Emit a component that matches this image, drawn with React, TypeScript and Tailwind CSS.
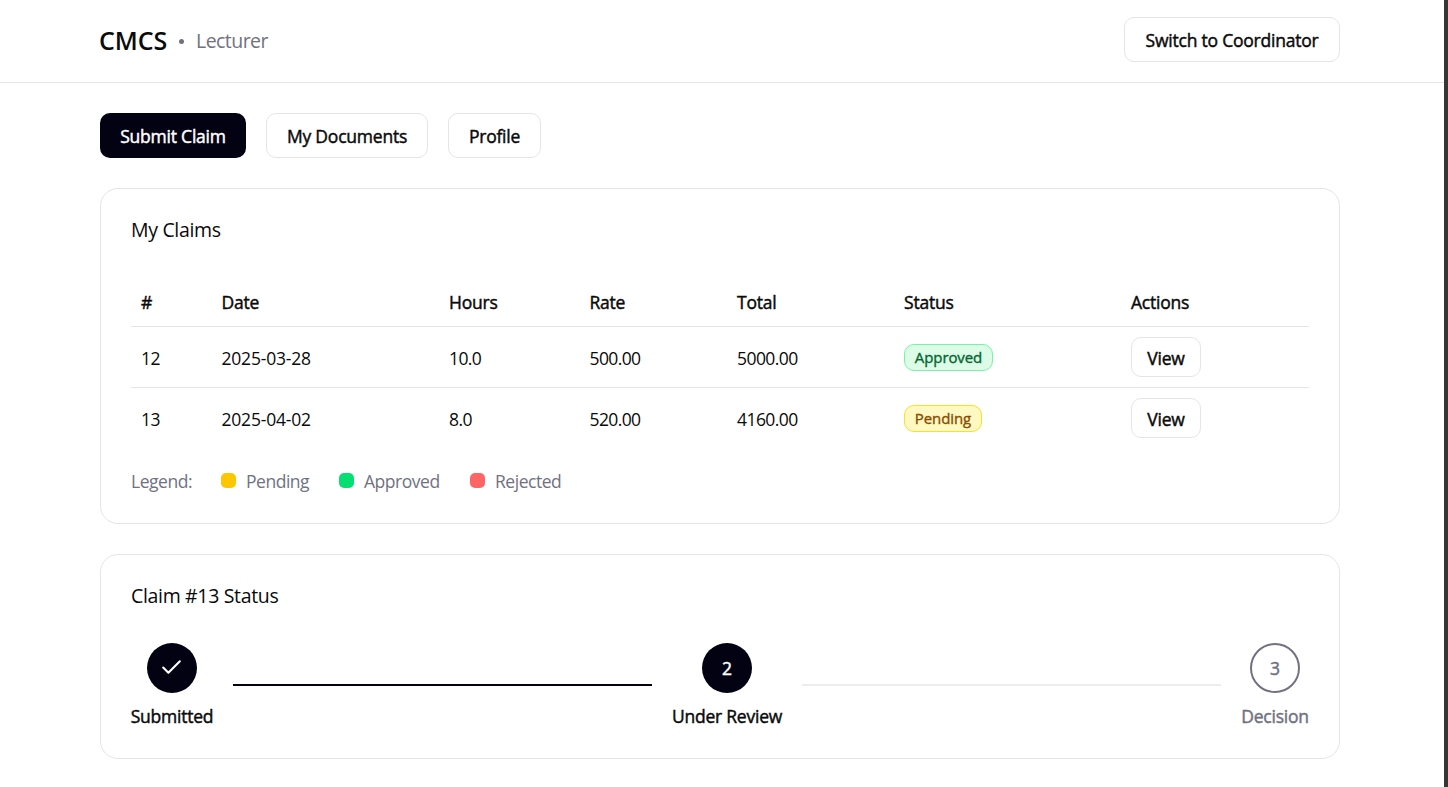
import React from "react";

const columns = ["#", "Date", "Hours", "Rate", "Total", "Status", "Actions"];

const claims = [
  { id: "12", date: "2025-03-28", hours: "10.0", rate: "500.00", total: "5000.00", status: "Approved" },
  { id: "13", date: "2025-04-02", hours: "8.0", rate: "520.00", total: "4160.00", status: "Pending" },
];

const legend = [
  { label: "Pending", color: "bg-[#fdc700]", width: "w-[88px]" },
  { label: "Approved", color: "bg-[#05df72]", width: "w-[101px]" },
  { label: "Rejected", color: "bg-[#ff6467]", width: "w-[91px]" },
];

const badgeStyles: Record<string, string> = {
  Approved: "w-[89px] border-[#7bf1a8] bg-[#dcfce7] text-[#016630]",
  Pending: "w-[78px] border-[#ffdf20] bg-[#fef9c2] text-[#894b00]",
};

const grid = "grid grid-cols-[80.5px_227.5px_140.5px_147.5px_167px_227px_188px]";

// Medium weight: regular outlines thickened by a hairline stroke.
const medium = "[-webkit-text-stroke:0.45px_currentColor] tracking-[-0.22px]";

function OutlineButton({ className, children }: { className: string; children: React.ReactNode }) {
  return (
    <button
      className={`flex items-center justify-center whitespace-nowrap rounded-[10px] border border-[#e5e5e5] bg-white pt-px ${medium} ${className}`}
    >
      {children}
    </button>
  );
}

function Card({ className, title, children }: { className: string; title: React.ReactNode; children: React.ReactNode }) {
  return (
    <section className={`rounded-[18px] border border-[#e5e5e5] bg-white px-[30px] pt-[29px] ${className}`}>
      <h2 className="h-6 text-[19.5px] leading-6 tracking-[-0.33px]">{title}</h2>
      {children}
    </section>
  );
}

export default function App() {
  return (
    <div className="flex h-[787px] w-[1448px] overflow-hidden bg-white font-['Open_Sans','Noto_Sans',sans-serif] text-[17.5px] leading-6 text-[#0a0a0a]">
      <div className="flex-1">
        <header className="flex h-[83px] items-center justify-between border-b border-[#e5e5e5] pr-[104px] pl-[100px]">
          <div className="flex items-center">
            <span className="-ml-px w-20 pb-0.5 text-[25px] font-semibold tracking-[-0.1px]">CMCS</span>
            <span className="mr-3 size-[5px] rounded-full bg-[#717182]" />
            <span className="text-[19.5px] tracking-[-0.55px] text-[#717182]">Lecturer</span>
          </div>
          <OutlineButton className="mb-1 h-[45px] w-[216px]">Switch to Coordinator</OutlineButton>
        </header>

        <main className="w-[1340px] pt-[30px] pl-[100px]">
          <nav className="flex gap-5">
            <button className={`flex h-[45px] w-[146px] items-center justify-center rounded-[10px] bg-[#030213] pt-px whitespace-nowrap text-white ${medium}`}>
              Submit Claim
            </button>
            <OutlineButton className="h-[45px] w-[162px]">My Documents</OutlineButton>
            <OutlineButton className="h-[45px] w-[93px]">Profile</OutlineButton>
          </nav>

          <Card className="mt-[30px] h-[336px]" title="My Claims">
            <div className="mt-[34px]">
              <div className={`${grid} h-[51px] items-center border-b border-[#e5e5e5] pt-px ${medium}`}>
                {columns.map((c) => (
                  <span key={c} className="pl-2.5">{c}</span>
                ))}
              </div>
              {claims.map((claim) => (
                <div key={claim.id} className={`${grid} h-[61px] items-center border-b border-[#e5e5e5] last:border-transparent`}>
                  <span className="pt-px pl-2.5 tracking-[-0.6px]">{claim.id}</span>
                  <span className="pt-px pl-2.5 tracking-[-0.2px]">{claim.date}</span>
                  <span className="pt-px pl-2.5 tracking-[-0.6px]">{claim.hours}</span>
                  <span className="pt-px pl-2.5 tracking-[-0.6px]">{claim.rate}</span>
                  <span className="pt-px pl-2.5 tracking-[-0.55px]">{claim.total}</span>
                  <span className="pl-2.5">
                    <span
                      className={`flex h-[27px] items-center justify-center rounded-[10px] border text-[15px] tracking-[-0.1px] [-webkit-text-stroke:0.35px_currentColor] ${badgeStyles[claim.status]}`}
                    >
                      {claim.status}
                    </span>
                  </span>
                  <span className="pl-2.5">
                    <OutlineButton className="h-10 w-[70px]">View</OutlineButton>
                  </span>
                </div>
              ))}
            </div>
            <div className="mt-5 flex h-6 items-center tracking-[-0.47px] text-[#717182]">
              <span className="w-[90px] pb-px">Legend:</span>
              <div className="flex gap-[30px]">
                {legend.map((item) => (
                  <span key={item.label} className={`flex items-center gap-2.5 ${item.width}`}>
                    <span className={`mb-0.5 size-[15px] shrink-0 rounded-[5px] ${item.color}`} />
                    <span className="pb-px">{item.label}</span>
                  </span>
                ))}
              </div>
            </div>
          </Card>

          <Card className="mt-[30px] h-[205px]" title="Claim #13 Status">
            <div className={`mt-[35px] flex justify-between ${medium}`}>
              <div className="flex w-[82px] flex-col items-center">
                <div className="flex size-[50px] items-center justify-center rounded-full bg-[#030213]">
                  <svg className="mr-px mb-0.5 size-[25px]" viewBox="0 0 24 24" fill="none" stroke="white" strokeWidth="2" strokeLinecap="round" strokeLinejoin="round">
                    <path d="M20 6 9 17l-5-5" />
                  </svg>
                </div>
                <span className="mt-[11px] whitespace-nowrap">Submitted</span>
              </div>
              <div className="mt-[41px] h-0.5 w-[419px] bg-[#030213]" />
              <div className="flex w-[110px] flex-col items-center">
                <div className="flex size-[50px] items-center justify-center rounded-full bg-[#030213] text-white">2</div>
                <span className="mt-[11px] whitespace-nowrap">Under Review</span>
              </div>
              <div className="mt-[41px] h-0.5 w-[419px] bg-[#ececf0]" />
              <div className="flex w-[68px] flex-col items-center text-[#717182]">
                <div className="flex size-[50px] items-center justify-center rounded-full border-2 border-[#717182]">3</div>
                <span className="mt-[11px] whitespace-nowrap">Decision</span>
              </div>
            </div>
          </Card>
        </main>
      </div>
      <div className="w-1 shrink-0 bg-[#363636]" />
    </div>
  );
}
